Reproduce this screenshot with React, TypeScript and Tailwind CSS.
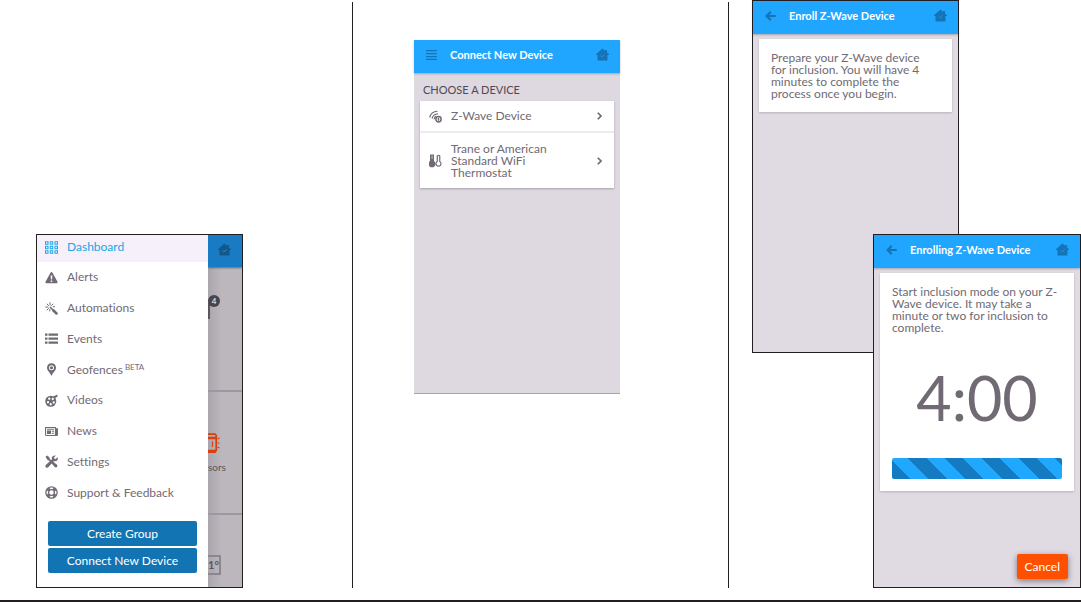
import type { ReactNode } from "react";

type IconProps = { className?: string };

function HomeIcon({ className }: IconProps) {
  return (
    <svg viewBox="0 0 26 26" className={className} aria-hidden="true">
      <path
        fill="currentColor"
        d="M13 1 L18 5.500 V4 H22 V9 L26 12.500 V14 H23 V25 H3 V14 H0 V12.500 Z"
      />
      <path d="M9.500 15 L12.300 17.800 L17 13" fill="none" stroke="#2b93e0" strokeWidth="2" />
    </svg>
  );
}

function BackIcon() {
  return (
    <svg viewBox="0 0 22 20" className="h-[10px] w-[11px]" fill="none" stroke="currentColor" strokeWidth="4.400" aria-hidden="true">
      <path d="M21.500 10 H4 M11.500 1.800 L3.300 10 L11.500 18.200" />
    </svg>
  );
}

function MenuIcon() {
  return (
    <svg viewBox="0 0 22 20" className="h-[10px] w-[11px]" fill="currentColor" aria-hidden="true">
      <path d="M0 0h22v2.600H0zM0 6h22v2.600H0zM0 12h22v2.600H0zM0 17.400h22v2.600H0z" />
    </svg>
  );
}

function ChevronIcon() {
  return (
    <svg viewBox="0 0 10 16" className="h-2 w-[5px] shrink-0" fill="none" stroke="currentColor" strokeWidth="3.400" aria-hidden="true">
      <path d="M1.5 1.5 L8 8 L1.5 14.5" />
    </svg>
  );
}

function MenuSvg({ children }: { children: ReactNode }) {
  return (
    <svg viewBox="0 0 26 26" className="size-[13px] shrink-0" fill="currentColor" aria-hidden="true">
      {children}
    </svg>
  );
}

const GridIcon = () => (
  <MenuSvg>
    <g fill="none" stroke="currentColor" strokeWidth="2">
      {[1.5, 10.5, 19.5].map((y) =>
        [1, 10.5, 20].map((x) => <rect key={`${x}-${y}`} x={x} y={y} width="5" height="5" />),
      )}
    </g>
  </MenuSvg>
);

const AlertIcon = () => (
  <MenuSvg>
    <path
      fillRule="evenodd"
      d="M13 2 Q14.2 2 15 3.4 L25 21.5 Q26 24.5 23.2 24.5 H2.8 Q0 24.5 1 21.5 L11 3.4 Q11.800 2 13 2 Z M11.200 9 L11.8 17 H14.2 L14.8 9 Z M11.500 18.800 V21.800 H14.500 V18.800 Z"
    />
  </MenuSvg>
);

const WandIcon = () => (
  <MenuSvg>
    <g fill="none" stroke="currentColor" strokeLinecap="round">
      <path strokeWidth="2" d="M10 1.500V6M1.500 10H6M4 4l3 3M16 4l-3 3M4 16l3-3M16.500 9.500H19M9.500 15V18" />
      <path strokeWidth="5" d="M16.500 16.500L23 23" />
      <path strokeWidth="3.500" d="M11 11L14 14" />
    </g>
  </MenuSvg>
);

const ListIcon = () => (
  <MenuSvg>
    <path d="M0 3h5v4.500H0zM7 3h19v4.500H7zM0 11h5v4.500H0zM7 11h19v4.500H7zM0 19h5v4.500H0zM7 19h19v4.500H7z" />
  </MenuSvg>
);

const PinIcon = () => (
  <MenuSvg>
    <path
      fillRule="evenodd"
      d="M13 0.500 C7.500 0.500 4 4.500 4 9.500 C4 15.500 10 18.500 13 26 C16 18.500 22 15.500 22 9.500 C22 4.500 18.500 0.500 13 0.500 Z M13 4.500 A5 5 0 1 1 13 14.500 A5 5 0 1 1 13 4.500 Z"
    />
    <circle cx="13" cy="9.500" r="3.200" />
  </MenuSvg>
);

const ReelIcon = () => (
  <MenuSvg>
    <circle cx="11.500" cy="14.500" r="11" />
    <path d="M16 5 L25 1 V5 L20 8.500 Z" />
    <g fill="#fff">
      <circle cx="8.500" cy="9.500" r="2.300" />
      <circle cx="15.500" cy="10" r="2.300" />
      <circle cx="6" cy="16.500" r="2.300" />
      <circle cx="11.500" cy="20.500" r="2.300" />
      <circle cx="17.500" cy="17" r="2.300" />
    </g>
  </MenuSvg>
);

const NewsIcon = () => (
  <MenuSvg>
    <path
      fillRule="evenodd"
      d="M0 4 H22 V6.500 H26 V19.500 Q26 22 23.500 22 H3 Q0 22 0 19.500 Z M2.200 6.200 V19.800 H19.800 V6.200 Z"
    />
    <path d="M4 11h8v7H4zM4 7.500h14v2H4zM13.500 11.500h4.500v2h-4.500zM13.500 15.500h4.500v2h-4.500z" />
  </MenuSvg>
);

const ToolsIcon = () => (
  <MenuSvg>
    <path d="M1 3.500 L4.500 1 L9 5 L9.500 8 L24 19.500 Q26 22 24 24 Q21.500 26 19 23.500 L8 11 L5 10 Z" />
    <path d="M25 4.500 L20.500 8.500 L17.500 5.500 L21.500 1 Q16 0 14 4 Q13 6 14 8.500 L1.500 20 Q0 23 2 25 Q4.500 26.500 7 24 L17.500 12.500 Q23 13.500 25.500 9 Q26 6.500 25 4.500 Z" />
  </MenuSvg>
);

const SupportIcon = () => (
  <MenuSvg>
    <g fill="none" stroke="currentColor">
      <circle cx="13" cy="13" r="11.300" strokeWidth="2.600" />
      <circle cx="13" cy="13" r="5.800" strokeWidth="2.600" />
      <path strokeWidth="7" d="M9 9L5.500 5.500M17 9l3.500-3.500M9 17l-3.500 3.500M17 17l3.500 3.500" />
    </g>
  </MenuSvg>
);

function ZWaveIcon() {
  return (
    <svg viewBox="0 0 26 26" className="size-[13px] shrink-0" fill="none" stroke="currentColor" aria-hidden="true">
      <path strokeWidth="2.400" d="M1.500 15 Q4 3 17 2.500 M6 17 Q8 8.500 18 7.500 M10.500 18.500 Q11 13 15 12.500" />
      <circle cx="19" cy="18.500" r="5.300" strokeWidth="3" />
      <path strokeWidth="3" d="M19 15.500v6" />
    </svg>
  );
}

function ThermostatIcon() {
  return (
    <svg viewBox="0 0 26 28" className="h-[14px] w-[13px] shrink-0" aria-hidden="true">
      <path fill="currentColor" d="M2 1H10V14a7 7 0 1 1-8 0z" />
      <path fill="none" stroke="currentColor" strokeWidth="2.400" d="M16.500 15V4q2.500-3 5 0v11a5 5 0 1 1-5 0z" />
      <path fill="#fff" d="M5.500 3h1.200v7H5.500z" />
    </svg>
  );
}

function SensorIcon() {
  return (
    <svg viewBox="0 0 24 40" className="h-5 w-3" fill="none" stroke="#d8400f" aria-hidden="true">
      <path strokeWidth="3.500" d="M0 2h14l2.500 3v30l-2.500 3H0" />
      <path strokeWidth="5" d="M0 10h16M0 36h16" />
      <path strokeWidth="2.400" d="M9 17v11M19 12l4-2M19 20h4M19 28l4 2" />
    </svg>
  );
}

function AppBar({ title, icon, label }: { title: string; icon: ReactNode; label: string }) {
  return (
    <header className="flex h-[33px] items-center bg-[#20a6ff] pr-[11px] pb-1 pl-3 text-[#1573b8] shadow-[0_1px_2px_#00000040]">
      <button type="button" aria-label={label} className="mr-[13px] flex">
        {icon}
      </button>
      <h2 className="flex-1 whitespace-nowrap text-[11px] leading-4 font-bold text-white">{title}</h2>
      <button type="button" aria-label="Home">
        <HomeIcon className="size-[13px]" />
      </button>
    </header>
  );
}

const menuItems = [
  { label: "Alerts", Icon: AlertIcon },
  { label: "Automations", Icon: WandIcon },
  { label: "Events", Icon: ListIcon },
  { label: "Geofences", Icon: PinIcon, tag: "BETA" },
  { label: "Videos", Icon: ReelIcon },
  { label: "News", Icon: NewsIcon },
  { label: "Settings", Icon: ToolsIcon },
  { label: "Support & Feedback", Icon: SupportIcon },
];

function MenuScreen() {
  return (
    <section className="flex w-[207px] border border-[#231f20]">
      <div className="flex-1 bg-white pb-3.5">
        <nav className="text-[12px] leading-4 text-[#716a74]">
          <a href="#dashboard" className="flex h-[27px] items-center gap-[9px] bg-[#f5f0f9] px-2 pb-[3px] text-[#20a6e8]">
            <GridIcon />
            Dashboard
          </a>
          <div className="grid h-[246px] grid-rows-8">
            {menuItems.map(({ label, Icon, tag }) => (
              <a key={label} href={`#${label}`} className="flex items-center gap-[9px] px-2">
                <Icon />
                <span className="whitespace-nowrap">
                  {label}
                  {tag && <sup className="ml-0.5 text-[8px]">{tag}</sup>}
                </span>
              </a>
            ))}
          </div>
        </nav>
        <div className="mx-[11px] mt-[13px] grid gap-0.5 text-[12px] leading-4 text-white">
          <button type="button" className="h-[25px] rounded-xs bg-[#1374b3]">Create Group</button>
          <button type="button" className="h-[25px] rounded-xs bg-[#1374b3]">Connect New Device</button>
        </div>
      </div>
      <div className="flex w-[34px] flex-col overflow-hidden bg-linear-to-r from-[#aaa6ad] to-[#bbb7bd] to-40% text-[#5b555d]">
        <div className="flex h-8 items-center bg-[#187bc4] px-2.5 pb-1 text-[#11588d] shadow-[0_1px_2px_#00000070]">
          <HomeIcon className="size-[13px]" />
        </div>
        <div className="flex h-[125px] items-start border-b-2 border-[#9d98a0] pt-7">
          <span className="mt-2 h-4 w-0.5 bg-[#5b555d]" />
          <span className="-ml-0.5 flex size-3 items-center justify-center rounded-full bg-[#4a454c] text-[8px] leading-3 text-white">4</span>
        </div>
        <div className="h-[123px] border-b-2 border-[#9d98a0] pt-[41px]">
          <SensorIcon />
          <p className="mt-2 text-[10px] leading-3">sors</p>
        </div>
        <div className="flex flex-1 items-start pt-10">
          <span className="h-5 border-2 border-l-0 border-[#8c878e] text-[11px] leading-4 font-bold">1°</span>
        </div>
      </div>
    </section>
  );
}

function ConnectScreen() {
  return (
    <section className="min-h-[354px] w-[206px] border-b border-[#aaa4ac] bg-[#ded8e0]">
      <AppBar title="Connect New Device" icon={<MenuIcon />} label="Menu" />
      <h3 className="px-[9px] pt-[11px] pb-[5px] text-[11px] leading-3 text-[#4f4952]">CHOOSE A DEVICE</h3>
      <ul className="mx-1.5 divide-y-2 divide-[#eeeaf0] bg-white text-[12px] leading-3 text-[#716a74] shadow-[0_1px_2px_#00000040]">
        <li>
          <a href="#zwave" className="flex h-[30px] items-center gap-[9px] pr-3 pl-[9px]">
            <ZWaveIcon />
            <span className="flex-1">Z-Wave Device</span>
            <ChevronIcon />
          </a>
        </li>
        <li>
          <a href="#thermostat" className="flex h-[55px] items-center gap-[9px] pr-3 pl-[9px]">
            <ThermostatIcon />
            <span className="flex-1 pr-8">Trane or American Standard WiFi Thermostat</span>
            <ChevronIcon />
          </a>
        </li>
      </ul>
    </section>
  );
}

function EnrollScreen() {
  return (
    <section className="min-h-[353px] w-[207px] border border-[#231f20] bg-[#e0dae3]">
      <AppBar title="Enroll Z-Wave Device" icon={<BackIcon />} label="Back" />
      <p className="mx-1.5 mt-[5px] bg-white pt-[13px] pr-5 pb-3 pl-3 text-[12px] leading-3 text-[#716a74] shadow-[0_1px_2px_#00000030]">
        Prepare your Z-Wave device for inclusion. You will have 4 minutes to complete the process once you begin.
      </p>
    </section>
  );
}

function EnrollingScreen() {
  return (
    <section className="relative -mt-[119px] flex min-h-[354px] w-[208px] flex-col self-end border border-[#231f20] bg-[#e0dae3]">
      <AppBar title="Enrolling Z-Wave Device" icon={<BackIcon />} label="Back" />
      <div className="mx-1.5 mt-[5px] bg-white px-3 pt-[13px] pb-3 text-[#716a74] shadow-[0_1px_2px_#00000030]">
        <p className="text-[12px] leading-3">
          Start inclusion mode on your Z-Wave device. It may take a minute or two for inclusion to complete.
        </p>
        <p className="mt-[34px] text-center text-[61px] leading-[60px]">4:00</p>
        <div
          role="progressbar"
          aria-label="Inclusion progress"
          className="mt-[30px] h-[21px] rounded-xs bg-[repeating-linear-gradient(45deg,#147bc2_0px,#147bc2_13px,#20a8ff_13px,#20a8ff_26px)]"
        />
      </div>
      <button
        type="button"
        className="mt-auto mr-3 mb-2 h-[25px] self-end rounded-xs bg-[#ff5000] px-2 text-[12px] leading-4 text-white shadow-[0_2px_6px_#00000070]"
      >
        Cancel
      </button>
    </section>
  );
}

export default function App() {
  return (
    <main className="border-b-2 border-[#231f20] bg-white font-[Lato,sans-serif] [font-variant-ligatures:none]">
      <div className="grid grid-cols-[353fr_376fr_352fr] pb-3">
        <div className="mt-0.5 flex items-end border-r border-[#231f20] pl-9">
          <MenuScreen />
        </div>
        <div className="mt-0.5 flex items-start border-r border-[#231f20] pt-[38px] pl-[61px]">
          <ConnectScreen />
        </div>
        <div className="flex flex-col pl-[23px]">
          <EnrollScreen />
          <EnrollingScreen />
        </div>
      </div>
    </main>
  );
}
